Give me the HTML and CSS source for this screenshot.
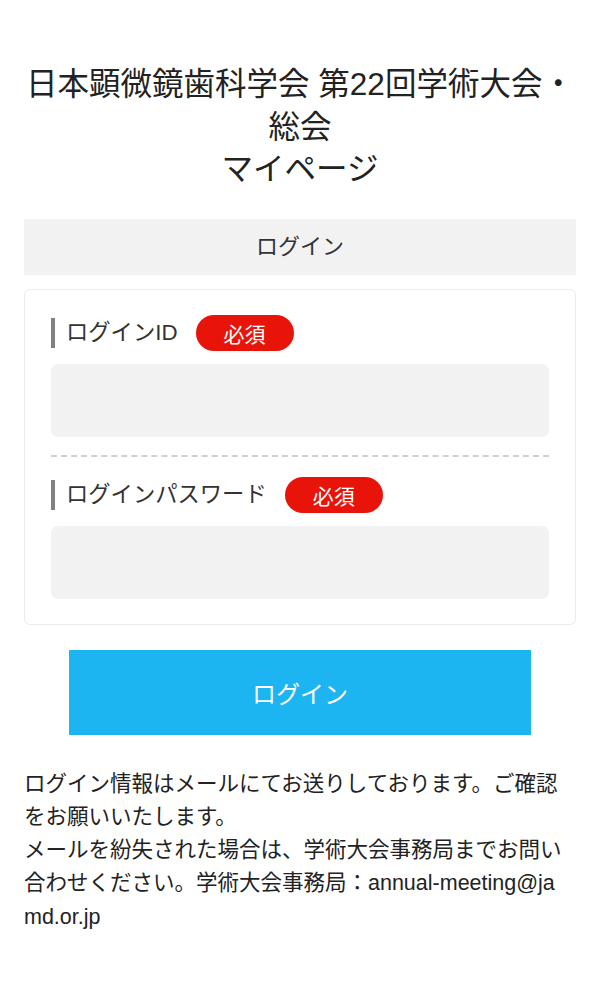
FILE: index.html
```html
<!DOCTYPE html>
<html lang="ja">
<head>
<meta charset="utf-8">
<title>マイページ ログイン</title>
<link rel="stylesheet" href="styles.css">
</head>
<body>
<main class="page">
  <h1 class="title">日本顕微鏡歯科学会 第22回学術大会・<span class="nowrap">総会</span><br>マイページ</h1>
  <h2 class="section-head">ログイン</h2>
  <form class="card">
    <div class="field">
      <div class="label-row">
        <span class="label">ログインID</span>
        <span class="badge">必須</span>
      </div>
      <input class="input" type="text">
    </div>
    <hr class="divider">
    <div class="field">
      <div class="label-row">
        <span class="label">ログインパスワード</span>
        <span class="badge">必須</span>
      </div>
      <input class="input" type="password">
    </div>
  </form>
  <div class="actions">
    <button class="submit" type="button">ログイン</button>
  </div>
  <p class="note">ログイン情報はメールにてお送りしております。ご確認<br>をお願いいたします。<br>メールを紛失された場合は、学術大会事務局までお問い<br>合わせください。学術大会事務局：annual-meeting@ja<br>md.or.jp</p>
</main>
</body>
</html>
```
FILE: styles.css
```css
* { box-sizing: border-box; }
html, body { margin: 0; padding: 0; background: #fff; }
body {
  font-family: "Liberation Sans", "Noto Sans CJK JP", sans-serif;
  color: #333;
}
.page {
  padding: 63px 24px 40px;
}
.title {
  margin: 0;
  font-size: 31.5px;
  line-height: 42.5px;
  font-weight: normal;
  text-align: center;
  color: #222;
}
.nowrap { white-space: nowrap; }
.section-head {
  margin: 28px 0 14px;
  height: 56px;
  background: #f2f2f2;
  font-size: 22px;
  font-weight: normal;
  line-height: 56px;
  text-align: center;
  color: #333;
}
.card {
  margin: 0;
  border: 1px solid #ebebeb;
  border-radius: 6px;
  padding: 25px 26px 25px;
}
.label-row {
  display: flex;
  align-items: center;
  gap: 18px;
  height: 36px;
}
.label {
  border-left: 4px solid #808080;
  padding-left: 11px;
  font-size: 22.3px;
  line-height: 30px;
  color: #333;
}
.badge {
  display: inline-flex;
  align-items: center;
  justify-content: center;
  width: 98px;
  height: 36px;
  border-radius: 18px;
  background: #e8140a;
  color: #fff;
  font-size: 21px;
}
.input {
  display: block;
  width: 100%;
  height: 73px;
  margin-top: 13px;
  border: none;
  border-radius: 7px;
  background: #f2f2f2;
}
.divider {
  margin: 18px 0 20px;
  border: none;
  border-top: 2px dashed #d0d0d0;
  height: 0;
}
.actions {
  display: flex;
  justify-content: center;
  margin-top: 25px;
}
.submit {
  width: 462px;
  height: 85px;
  border: none;
  border-radius: 0;
  background: #1cb4f1;
  color: #fff;
  font-family: inherit;
  font-size: 24px;
}
.note {
  margin: 33px 0 0;
  font-size: 21.5px;
  line-height: 33.25px;
  color: #222;
  white-space: nowrap;
}
```
